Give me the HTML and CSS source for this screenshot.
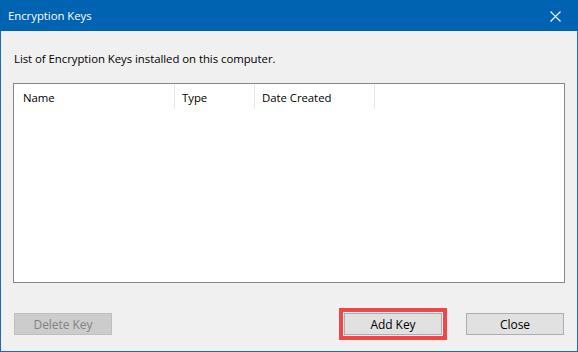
FILE: index.html
```html
<!DOCTYPE html>
<html lang="en">
<head>
  <meta charset="UTF-8">
  <title>Encryption Keys</title>
  <link rel="stylesheet" href="styles.css">
</head>
<body>
  <div class="window">
    <div class="titlebar">
      <span class="title">Encryption Keys</span>
      <span class="close-x">
        <svg width="11" height="11" viewBox="0 0 11 11"><path d="M0.5 0.5 L10.5 10.5 M10.5 0.5 L0.5 10.5" stroke="#fff" stroke-width="1.1" fill="none"/></svg>
      </span>
    </div>
    <div class="content">
      <p class="label">List of Encryption Keys installed on this computer.</p>
      <div class="list">
        <div class="list-head">
          <div class="col col-name">Name</div>
          <div class="col col-type">Type</div>
          <div class="col col-date">Date Created</div>
        </div>
      </div>
      <div class="buttons">
        <button class="btn disabled" disabled>Delete Key</button>
        <div class="spacer"></div>
        <button class="btn highlight">Add Key</button>
        <button class="btn close">Close</button>
      </div>
    </div>
  </div>
</body>
</html>
```

FILE: styles.css
```css
body {
  margin: 0;
  background: #f0f0f0;
  font-family: "Open Sans", "Noto Sans", sans-serif;
  font-size: 11.4px;
  letter-spacing: -0.05px;
  color: #000;
}
.window {
  width: 578px;
  height: 352px;
  box-sizing: border-box;
  border: 1px solid #1a6db5;
  border-top: none;
  display: flex;
  flex-direction: column;
}
.titlebar {
  height: 31px;
  background: #0063b1;
  color: #fff;
  display: flex;
  align-items: center;
  padding-left: 8px;
  margin: 0 -1px;
}
.title {
  flex: 1;
  padding-bottom: 1px;
}
.close-x {
  width: 46px;
  display: flex;
  justify-content: center;
  padding-top: 1px;
}
.content {
  flex: 1;
  padding: 0 12px;
  display: flex;
  flex-direction: column;
}
.label {
  margin: 20px 0 0 1px;
  line-height: 16px;
}
.list {
  margin-top: 16px;
  height: 200px;
  box-sizing: border-box;
  border: 1px solid #828790;
  background: #fff;
}
.list-head {
  display: flex;
  height: 25px;
}
.col {
  display: flex;
  align-items: center;
  padding-left: 7px;
  box-sizing: border-box;
  border-right: 1px solid #e5e5e5;
  margin: 1px 0 0;
}
.col-name { width: 161px; padding-left: 9px; }
.col-type { width: 80px; }
.col-date { width: 120px; }
.buttons {
  display: flex;
  margin-top: 30px;
  padding: 0 1px;
}
.spacer { flex: 1; }
.btn {
  width: 98px;
  height: 22px;
  box-sizing: border-box;
  border: 1px solid #adadad;
  background: #e1e1e1;
  font-family: inherit;
  font-size: 12px;
  letter-spacing: inherit;
  color: #000;
  padding: 0;
}
.btn.disabled {
  background: #cccccc;
  border-color: #bfbfbf;
  color: #838383;
}
.btn.highlight {
  outline: 4px solid #f24646;
  outline-offset: 1px;
  margin-right: 24px;
}
```
